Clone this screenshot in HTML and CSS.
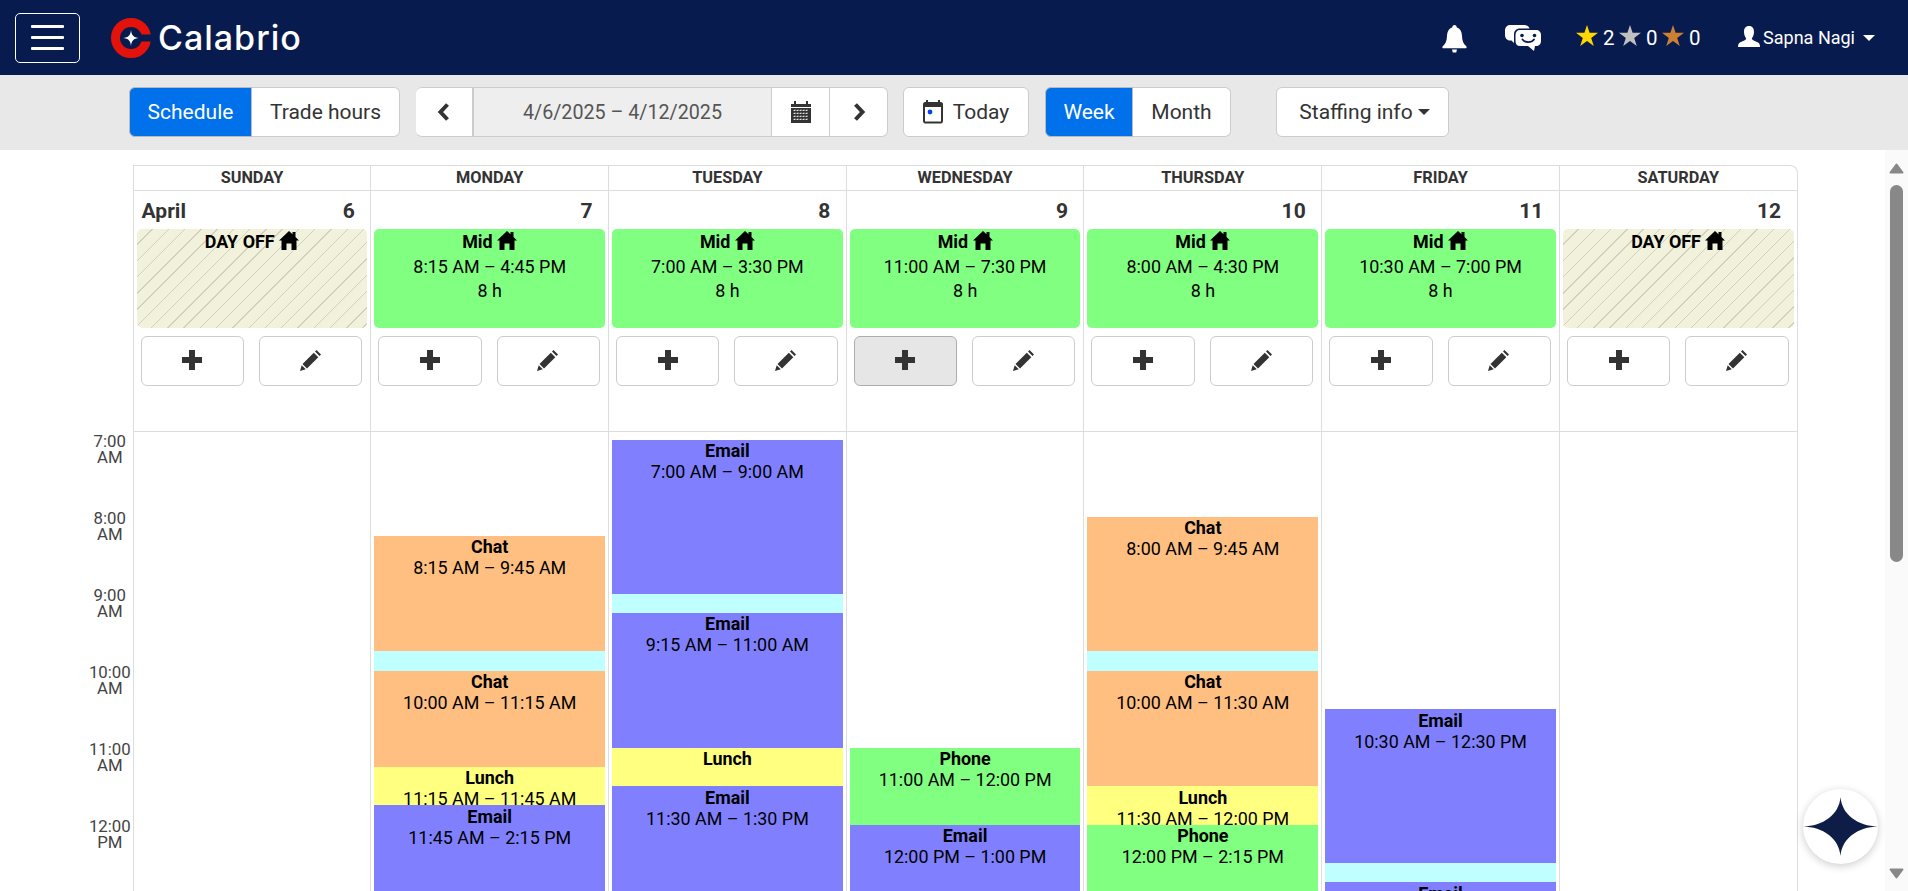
FILE: index.html
```html
<!DOCTYPE html>
<html lang="en">
<head>
	<meta charset="UTF-8">
	<title>Calabrio - My Schedule</title>
	<link rel="stylesheet" href="styles.css">
</head>
<body>
	<header class="navbar">
		<button class="menu-btn"><span></span><span></span><span></span></button>
		<div class="logo">
			<svg width="41" height="40" viewBox="0 0 41 40">
				<circle cx="20" cy="20" r="15.5" fill="none" stroke="#e3120b" stroke-width="9"/>
				<rect x="22" y="16.5" width="19" height="7" fill="#071b4f"/>
				<path d="M20 12 C20.6 17.5 22.5 19.4 28 20 C22.5 20.6 20.6 22.5 20 28 C19.4 22.5 17.5 20.6 12 20 C17.5 19.4 19.4 17.5 20 12Z" fill="#fff"/>
			</svg>
			<span>Calabrio</span>
		</div>
		<div class="nav-right">
			<svg class="bell" width="25" height="28" viewBox="0 0 25 28"><path d="M12.5 0 C14 0 14.6 1 14.8 2.4 C18.6 3.6 19.8 7 20 11 C20.2 16 21.5 19 24.5 21.5 C25 22.4 24.4 23.3 23.4 23.3 L1.6 23.3 C.6 23.3 0 22.4 .5 21.5 C3.5 19 4.8 16 5 11 C5.2 7 6.4 3.6 10.2 2.4 C10.4 1 11 0 12.5 0Z M10 24.6 L15 24.6 L14.2 27.4 L10.8 27.4Z" fill="#fff"/></svg>
			<svg class="chat-icon" width="36" height="26" viewBox="0 0 36 26">
				<path d="M5 0 L19 0 C22 0 24 1.500 24.500 3.500 L15 3.500 C11 3.500 9 6 9 9 L9 18 L6.500 15.500 L5 15.500 C2 15.500 0 13 0 10 L0 5.500 C0 2.500 2 0 5 0Z" fill="#fff"/>
				<path d="M15 5 L31 5 C34 5 36 7 36 10 L36 16 C36 19 34 21 31 21 L30 21 L29 26 L23 21 L15 21 C12 21 10.500 19 10.500 16 L10.500 10 C10.500 7 12 5 15 5Z" fill="#fff"/>
				<circle cx="17" cy="10.500" r="1.800" fill="#071b4f"/><circle cx="29.500" cy="10.500" r="1.800" fill="#071b4f"/>
				<path d="M17.500 14.500 C20 18 26.500 18 29 14.500" fill="none" stroke="#071b4f" stroke-width="1.800" stroke-linecap="round"/>
			</svg>
			<div class="stars">
				<svg width="22" height="21" viewBox="0 0 22 21"><path d="M11 0 L13.600 7.800 L22 7.800 L15.200 12.900 L17.800 21 L11 16 L4.200 21 L6.800 12.900 L0 7.800 L8.400 7.800Z" fill="#ffd700"/></svg>
				<span>2</span>
				<svg width="22" height="21" viewBox="0 0 22 21"><path d="M11 0 L13.600 7.800 L22 7.800 L15.200 12.900 L17.800 21 L11 16 L4.200 21 L6.800 12.900 L0 7.800 L8.400 7.800Z" fill="#c0c0c0"/></svg>
				<span>0</span>
				<svg width="22" height="21" viewBox="0 0 22 21"><path d="M11 0 L13.600 7.800 L22 7.800 L15.200 12.900 L17.800 21 L11 16 L4.200 21 L6.800 12.900 L0 7.800 L8.400 7.800Z" fill="#cd7f32"/></svg>
				<span>0</span>
			</div>
			<div class="user">
				<svg width="22" height="21" viewBox="0 0 22 21"><path d="M11 0 C14.500 0 16 2.500 16 6 C16 9 14.800 11 13.800 12.500 C14 14 16 14.800 18.500 15.800 C21 16.800 22 18 22 21 L0 21 C0 18 1 16.800 3.500 15.800 C6 14.800 8 14 8.200 12.500 C7.200 11 6 9 6 6 C6 2.500 7.500 0 11 0Z" fill="#fff"/></svg>
				<span>Sapna Nagi</span>
				<i class="caret"></i>
			</div>
		</div>
	</header>

	<div class="toolbar">
		<div class="btn-group">
			<button class="btn active schedule-btn">Schedule</button>
			<button class="btn trade-btn">Trade hours</button>
		</div>
		<div class="btn-group date-group">
			<button class="btn icon-btn prev-btn"><svg width="14" height="18" viewBox="0 0 14 18"><path d="M10.500 1.500 L3.500 9 L10.500 16.500" fill="none" stroke="#333" stroke-width="4"/></svg></button>
			<div class="date-range">4/6/2025 – 4/12/2025</div>
			<button class="btn icon-btn"><svg width="20" height="22" viewBox="0 0 20 22"><path d="M0 3 H3 V0 H5 V3 H15 V0 H17 V3 H20 V6 H0Z M0 7 H20 V22 H0Z" fill="#333"/><path d="M2.500 9.500 H17.500 M2.500 12.500 H17.500 M2.500 15.500 H17.500 M2.500 18.500 H17.500 M4 8.500 V20 M7 8.500 V20 M10 8.500 V20 M13 8.500 V20 M16 8.500 V20" stroke="#fff" stroke-width=".8" stroke-dasharray="1.500 1.500"/></svg></button>
			<button class="btn icon-btn"><svg width="14" height="18" viewBox="0 0 14 18"><path d="M3.500 1.500 L10.500 9 L3.500 16.500" fill="none" stroke="#333" stroke-width="4"/></svg></button>
		</div>
		<button class="btn today-btn"><svg width="20" height="24" viewBox="0 0 20 24"><path d="M3 0 H5 V2 H15 V0 H17 V2 H18 C19 2 20 3 20 4 V21 C20 22.500 19 23.500 18 23.500 H2 C1 23.500 0 22.500 0 21 V4 C0 3 1 2 2 2 H3Z" fill="#333"/><rect x="2" y="7" width="16" height="14.500" fill="#fff"/><circle cx="7" cy="12" r="2.400" fill="#0044ee"/></svg>Today</button>
		<div class="btn-group">
			<button class="btn active week-btn">Week</button>
			<button class="btn month-btn">Month</button>
		</div>
		<button class="btn staffing-btn">Staffing info<i class="caret dark"></i></button>
	</div>

	<main class="main">
		<div class="calendar">
			<div class="hours">
				<div class="hour">7:00<br>AM</div>
				<div class="hour">8:00<br>AM</div>
				<div class="hour">9:00<br>AM</div>
				<div class="hour">10:00<br>AM</div>
				<div class="hour">11:00<br>AM</div>
				<div class="hour">12:00<br>PM</div>
			</div>
			<div class="week">
				<!-- sunday -->
				<section class="day">
					<div class="day-name">Sunday</div>
					<div class="day-top">
						<div class="day-date"><span>April</span><span>6</span></div>
						<div class="shift off"><div class="shift-title">DAY OFF <svg class="home" width="20" height="19" viewBox="0 0 20 19"><path d="M10 0 L13.500 3.200 V1 H16.500 V6 L20 9.500 H17.500 V19 H12.500 V12.500 H7.500 V19 H2.500 V9.500 H0Z"/></svg></div></div>
						<div class="day-actions">
							<button class="action"><svg width="20" height="20" viewBox="0 0 20 20"><path d="M7 0 H13 V7 H20 V13 H13 V20 H7 V13 H0 V7 H7Z" fill="#333"/></svg></button>
							<button class="action"><svg width="22" height="22" viewBox="0 0 22 22"><path d="M16.500 1 L21 5.500 L19.500 7 L15 2.500Z M13.800 3.700 L18.300 8.200 L7 19.500 L2.500 15Z M1.700 16.200 L5.800 20.300 L0 22Z" fill="#333"/></svg></button>
						</div>
					</div>
					<div class="day-grid"></div>
				</section>
				<!-- monday -->
				<section class="day">
					<div class="day-name">Monday</div>
					<div class="day-top">
						<div class="day-date"><span></span><span>7</span></div>
						<div class="shift"><div class="shift-title">Mid <svg class="home" width="20" height="19" viewBox="0 0 20 19"><path d="M10 0 L13.500 3.200 V1 H16.500 V6 L20 9.500 H17.500 V19 H12.500 V12.500 H7.500 V19 H2.500 V9.500 H0Z"/></svg></div><div>8:15 AM – 4:45 PM</div><div>8 h</div></div>
						<div class="day-actions">
							<button class="action"><svg width="20" height="20" viewBox="0 0 20 20"><path d="M7 0 H13 V7 H20 V13 H13 V20 H7 V13 H0 V7 H7Z" fill="#333"/></svg></button>
							<button class="action"><svg width="22" height="22" viewBox="0 0 22 22"><path d="M16.500 1 L21 5.500 L19.500 7 L15 2.500Z M13.800 3.700 L18.300 8.200 L7 19.500 L2.500 15Z M1.700 16.200 L5.800 20.300 L0 22Z" fill="#333"/></svg></button>
						</div>
					</div>
					<div class="day-grid">
						<div class="event chat" style="grid-row: 6 / 12"><b>Chat</b><div>8:15 AM – 9:45 AM</div></div>
						<div class="event break" style="grid-row: 12 / 13"></div>
						<div class="event chat" style="grid-row: 13 / 18"><b>Chat</b><div>10:00 AM – 11:15 AM</div></div>
						<div class="event lunch" style="grid-row: 18 / 20"><b>Lunch</b><div>11:15 AM – 11:45 AM</div></div>
						<div class="event email" style="grid-row: 20 / 30"><b>Email</b><div>11:45 AM – 2:15 PM</div></div>
					</div>
				</section>
				<!-- tuesday -->
				<section class="day">
					<div class="day-name">Tuesday</div>
					<div class="day-top">
						<div class="day-date"><span></span><span>8</span></div>
						<div class="shift"><div class="shift-title">Mid <svg class="home" width="20" height="19" viewBox="0 0 20 19"><path d="M10 0 L13.500 3.200 V1 H16.500 V6 L20 9.500 H17.500 V19 H12.500 V12.500 H7.500 V19 H2.500 V9.500 H0Z"/></svg></div><div>7:00 AM – 3:30 PM</div><div>8 h</div></div>
						<div class="day-actions">
							<button class="action"><svg width="20" height="20" viewBox="0 0 20 20"><path d="M7 0 H13 V7 H20 V13 H13 V20 H7 V13 H0 V7 H7Z" fill="#333"/></svg></button>
							<button class="action"><svg width="22" height="22" viewBox="0 0 22 22"><path d="M16.500 1 L21 5.500 L19.500 7 L15 2.500Z M13.800 3.700 L18.300 8.200 L7 19.500 L2.500 15Z M1.700 16.200 L5.800 20.300 L0 22Z" fill="#333"/></svg></button>
						</div>
					</div>
					<div class="day-grid">
						<div class="event email" style="grid-row: 1 / 9"><b>Email</b><div>7:00 AM – 9:00 AM</div></div>
						<div class="event break" style="grid-row: 9 / 10"></div>
						<div class="event email" style="grid-row: 10 / 17"><b>Email</b><div>9:15 AM – 11:00 AM</div></div>
						<div class="event lunch" style="grid-row: 17 / 19"><b>Lunch</b></div>
						<div class="event email" style="grid-row: 19 / 27"><b>Email</b><div>11:30 AM – 1:30 PM</div></div>
					</div>
				</section>
				<!-- wednesday -->
				<section class="day">
					<div class="day-name">Wednesday</div>
					<div class="day-top">
						<div class="day-date"><span></span><span>9</span></div>
						<div class="shift"><div class="shift-title">Mid <svg class="home" width="20" height="19" viewBox="0 0 20 19"><path d="M10 0 L13.500 3.200 V1 H16.500 V6 L20 9.500 H17.500 V19 H12.500 V12.500 H7.500 V19 H2.500 V9.500 H0Z"/></svg></div><div>11:00 AM – 7:30 PM</div><div>8 h</div></div>
						<div class="day-actions">
							<button class="action pressed"><svg width="20" height="20" viewBox="0 0 20 20"><path d="M7 0 H13 V7 H20 V13 H13 V20 H7 V13 H0 V7 H7Z" fill="#333"/></svg></button>
							<button class="action"><svg width="22" height="22" viewBox="0 0 22 22"><path d="M16.500 1 L21 5.500 L19.500 7 L15 2.500Z M13.800 3.700 L18.300 8.200 L7 19.500 L2.500 15Z M1.700 16.200 L5.800 20.300 L0 22Z" fill="#333"/></svg></button>
						</div>
					</div>
					<div class="day-grid">
						<div class="event phone" style="grid-row: 17 / 21"><b>Phone</b><div>11:00 AM – 12:00 PM</div></div>
						<div class="event email" style="grid-row: 21 / 25"><b>Email</b><div>12:00 PM – 1:00 PM</div></div>
					</div>
				</section>
				<!-- thursday -->
				<section class="day">
					<div class="day-name">Thursday</div>
					<div class="day-top">
						<div class="day-date"><span></span><span>10</span></div>
						<div class="shift"><div class="shift-title">Mid <svg class="home" width="20" height="19" viewBox="0 0 20 19"><path d="M10 0 L13.500 3.200 V1 H16.500 V6 L20 9.500 H17.500 V19 H12.500 V12.500 H7.500 V19 H2.500 V9.500 H0Z"/></svg></div><div>8:00 AM – 4:30 PM</div><div>8 h</div></div>
						<div class="day-actions">
							<button class="action"><svg width="20" height="20" viewBox="0 0 20 20"><path d="M7 0 H13 V7 H20 V13 H13 V20 H7 V13 H0 V7 H7Z" fill="#333"/></svg></button>
							<button class="action"><svg width="22" height="22" viewBox="0 0 22 22"><path d="M16.500 1 L21 5.500 L19.500 7 L15 2.500Z M13.800 3.700 L18.300 8.200 L7 19.500 L2.500 15Z M1.700 16.200 L5.800 20.300 L0 22Z" fill="#333"/></svg></button>
						</div>
					</div>
					<div class="day-grid">
						<div class="event chat" style="grid-row: 5 / 12"><b>Chat</b><div>8:00 AM – 9:45 AM</div></div>
						<div class="event break" style="grid-row: 12 / 13"></div>
						<div class="event chat" style="grid-row: 13 / 19"><b>Chat</b><div>10:00 AM – 11:30 AM</div></div>
						<div class="event lunch" style="grid-row: 19 / 21"><b>Lunch</b><div>11:30 AM – 12:00 PM</div></div>
						<div class="event phone" style="grid-row: 21 / 30"><b>Phone</b><div>12:00 PM – 2:15 PM</div></div>
					</div>
				</section>
				<!-- friday -->
				<section class="day">
					<div class="day-name">Friday</div>
					<div class="day-top">
						<div class="day-date"><span></span><span>11</span></div>
						<div class="shift"><div class="shift-title">Mid <svg class="home" width="20" height="19" viewBox="0 0 20 19"><path d="M10 0 L13.500 3.200 V1 H16.500 V6 L20 9.500 H17.500 V19 H12.500 V12.500 H7.500 V19 H2.500 V9.500 H0Z"/></svg></div><div>10:30 AM – 7:00 PM</div><div>8 h</div></div>
						<div class="day-actions">
							<button class="action"><svg width="20" height="20" viewBox="0 0 20 20"><path d="M7 0 H13 V7 H20 V13 H13 V20 H7 V13 H0 V7 H7Z" fill="#333"/></svg></button>
							<button class="action"><svg width="22" height="22" viewBox="0 0 22 22"><path d="M16.500 1 L21 5.500 L19.500 7 L15 2.500Z M13.800 3.700 L18.300 8.200 L7 19.500 L2.500 15Z M1.700 16.200 L5.800 20.300 L0 22Z" fill="#333"/></svg></button>
						</div>
					</div>
					<div class="day-grid">
						<div class="event email" style="grid-row: 15 / 23"><b>Email</b><div>10:30 AM – 12:30 PM</div></div>
						<div class="event break" style="grid-row: 23 / 24"></div>
						<div class="event email" style="grid-row: 24 / 30"><b>Email</b><div>12:45 PM – 2:15 PM</div></div>
					</div>
				</section>
				<!-- saturday -->
				<section class="day">
					<div class="day-name">Saturday</div>
					<div class="day-top">
						<div class="day-date"><span></span><span>12</span></div>
						<div class="shift off"><div class="shift-title">DAY OFF <svg class="home" width="20" height="19" viewBox="0 0 20 19"><path d="M10 0 L13.500 3.200 V1 H16.500 V6 L20 9.500 H17.500 V19 H12.500 V12.500 H7.500 V19 H2.500 V9.500 H0Z"/></svg></div></div>
						<div class="day-actions">
							<button class="action"><svg width="20" height="20" viewBox="0 0 20 20"><path d="M7 0 H13 V7 H20 V13 H13 V20 H7 V13 H0 V7 H7Z" fill="#333"/></svg></button>
							<button class="action"><svg width="22" height="22" viewBox="0 0 22 22"><path d="M16.500 1 L21 5.500 L19.500 7 L15 2.500Z M13.800 3.700 L18.300 8.200 L7 19.500 L2.500 15Z M1.700 16.200 L5.800 20.300 L0 22Z" fill="#333"/></svg></button>
						</div>
					</div>
					<div class="day-grid"></div>
				</section>
			</div>
		</div>
		<div class="scrollbar">
			<svg width="15" height="11" viewBox="0 0 15 11"><path d="M7.500 1.500 L13.500 9.500 H1.500Z" fill="#888" stroke="#888" stroke-width="2" stroke-linejoin="round"/></svg>
			<div class="thumb"></div>
			<svg class="arrow-down" width="15" height="11" viewBox="0 0 15 11"><path d="M7.500 9.500 L13.500 1.500 H1.500Z" fill="#888" stroke="#888" stroke-width="2" stroke-linejoin="round"/></svg>
		</div>
		<button class="assist-btn">
			<svg width="75" height="59" viewBox="0 0 75 59"><path d="M37.500 0 C39 18 55 29 75 29.500 C55 30 39 41 37.500 59 C36 41 20 30 0 29.500 C20 29 36 18 37.500 0Z" fill="#0d1d47"/></svg>
		</button>
	</main>
</body>
</html>
```

FILE: styles.css
```css
html, body {
	margin: 0;
	padding: 0;
	height: 100%;
	overflow: hidden;
}
body {
	font-family: Roboto, "Liberation Sans", sans-serif;
	color: #333;
	background: #fff;
}
button {
	font-family: inherit;
	cursor: pointer;
}

/* top bar */
.navbar {
	height: 75px;
	background: #071b4f;
	display: flex;
	align-items: center;
	padding-left: 15px;
	color: #fff;
}
.menu-btn {
	width: 65px;
	height: 50px;
	background: none;
	border: 1px solid #fff;
	border-radius: 5px;
	padding: 0;
	display: flex;
	flex-direction: column;
	align-items: center;
	justify-content: center;
	gap: 8px;
}
.menu-btn span {
	width: 33px;
	height: 3px;
	background: #fff;
	border-radius: 1px;
}
.logo {
	display: flex;
	align-items: center;
	margin-left: 31px;
	gap: 6px;
}
.logo span {
	font-family: Inter, sans-serif;
	font-size: 34px;
	line-height: 40px;
	font-weight: 500;
	letter-spacing: 1px;
}
.nav-right {
	margin-left: auto;
	display: flex;
	align-items: center;
	padding-right: 33px;
}
.bell {
	margin-top: 3px;
}
.chat-icon {
	margin-left: 38px;
}
.stars {
	display: flex;
	align-items: center;
	margin-left: 35px;
	font-size: 20.5px;
}
.stars svg {
	margin-top: -5px;
}
.stars span {
	margin: 0 5px 0 5px;
	width: 11px;
}
.user {
	display: flex;
	align-items: center;
	margin-left: 33px;
	font-size: 18px;
}
.user svg {
	margin-top: -3px;
}
.user span {
	margin-left: 3px;
}
.caret {
	display: inline-block;
	border-top: 6px solid #fff;
	border-left: 6px solid transparent;
	border-right: 6px solid transparent;
	margin-left: 8px;
}
.caret.dark {
	border-top-color: #333;
	margin-left: 5px;
}

/* toolbar */
.toolbar {
	height: 75px;
	box-sizing: border-box;
	padding: 0 0 1px 129px;
	background: #e8e8e8;
	display: flex;
	align-items: center;
}
.btn-group {
	display: flex;
}
.btn {
	height: 50px;
	background: #fff;
	border: 1px solid #ccc;
	color: #333;
	font-size: 21px;
	padding: 0;
	display: flex;
	align-items: center;
	justify-content: center;
	border-radius: 6px;
}
.btn-group .btn:first-child {
	border-radius: 6px 0 0 6px;
}
.btn-group .btn:last-child {
	border-radius: 0 6px 6px 0;
	border-left: 0;
}
.btn.active {
	background: #0071eb;
	color: #fff;
	border-color: #bbb;
}
.schedule-btn { width: 123px; }
.trade-btn { width: 148px; }
.date-group {
	margin-left: 16px;
}
.icon-btn {
	width: 58px;
	border-radius: 0;
	border-left: 0;
}
.prev-btn { width: 57px; }
.date-range {
	width: 299px;
	height: 50px;
	box-sizing: border-box;
	background: #eee;
	border: 1px solid #ccc;
	line-height: 50px;
	text-align: center;
	font-size: 19.7px;
	color: #555;
}
.today-btn {
	width: 126px;
	margin-left: 15px;
	gap: 10px;
}
.week-btn {
	width: 88px;
	margin-left: 16px;
}
.month-btn { width: 98px; }
.staffing-btn {
	width: 173px;
	margin-left: 45px;
	padding-left: 4px;
}

/* schedule */
.main {
	position: relative;
	display: flex;
	height: 741px;
	overflow: hidden;
}
.calendar {
	flex: 1;
	display: flex;
	align-items: flex-start;
	padding-top: 15px;
}
.hours {
	width: 132.6px;
	box-sizing: border-box;
	padding: 267.5px 0 0 87px;
	flex-shrink: 0;
}
.hour {
	height: 77px;
	font-size: 16.8px;
	line-height: 16.8px;
	color: #444;
	text-align: center;
}
.week {
	width: 1665px;
	flex-shrink: 0;
	display: flex;
	border-top: 1px solid #ddd;
	border-right: 1px solid #ddd;
	border-radius: 0 8px 0 0;
	box-sizing: border-box;
}
.day {
	flex: 1;
	min-width: 0;
	border-left: 1px solid #ddd;
}
.day-name {
	height: 24px;
	line-height: 24px;
	border-bottom: 1px solid #ddd;
	text-align: center;
	font-size: 16.3px;
	font-weight: 700;
	text-transform: uppercase;
	color: #333;
}
.day-top {
	height: 240px;
	border-bottom: 1px solid #ddd;
}
.day-date {
	height: 38px;
	box-sizing: border-box;
	padding: 2px 15.5px 0 8px;
	display: flex;
	justify-content: space-between;
	align-items: center;
	font-size: 21px;
	font-weight: 700;
	color: #333;
}
.shift {
	height: 99px;
	box-sizing: border-box;
	padding-top: 1px;
	margin: 0 3px;
	border-radius: 5px;
	background: #80ff80;
	color: #000;
	text-align: center;
	font-size: 17.9px;
	line-height: 24.6px;
}
.shift.off {
	background: repeating-linear-gradient(135deg, #f2f2dc 0, #f2f2dc 10.5px, #d0d0bc 10.5px, #d0d0bc 11.5px);
}
.shift-title {
	font-weight: 700;
}
.home {
	vertical-align: -2px;
}
.day-actions {
	display: flex;
	gap: 15px;
	padding: 8px 8px 0 7px;
}
.action {
	flex: 1;
	height: 50px;
	padding: 0 0 3px;
	background: #fff;
	border: 1px solid #ccc;
	border-radius: 6px;
	display: flex;
	align-items: center;
	justify-content: center;
}
.action.pressed {
	background: #e6e6e6;
	border-color: #adadad;
}
.day-grid {
	display: grid;
	grid-template-columns: 1fr;
	grid-auto-rows: 19.25px;
	padding: 7.5px 3px 0;
	height: 460px;
}
.event {
	overflow: hidden;
	color: #000;
	text-align: center;
	font-size: 17.9px;
	line-height: 21px;
	padding-top: .5px;
	box-sizing: border-box;
}
.event b {
	display: block;
	font-weight: 700;
}
.event.chat { background: #ffbf80; }
.event.break { background: #bfffff; }
.event.lunch { background: #ffff80; }
.event.email { background: #8080ff; }
.event.phone { background: #80ff80; }

/* scrollbar + floating button */
.scrollbar {
	width: 23px;
	flex-shrink: 0;
	background: #fafafa;
	display: flex;
	flex-direction: column;
	align-items: center;
	padding: 13px 0 12px;
	box-sizing: border-box;
}
.thumb {
	width: 13px;
	height: 377px;
	margin-top: 11px;
	background: #888;
	border-radius: 7px;
}
.arrow-down {
	margin-top: auto;
}
.assist-btn {
	position: absolute;
	right: 30px;
	bottom: 27px;
	width: 75px;
	height: 75px;
	padding: 0;
	border: 0;
	border-radius: 50%;
	background: #fff;
	box-shadow: 0 2px 8px rgba(0,0,0,.2);
	display: flex;
	align-items: center;
	justify-content: center;
}
```
